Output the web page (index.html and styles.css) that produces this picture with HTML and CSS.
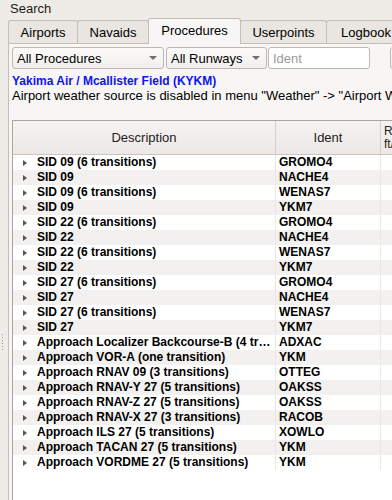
FILE: index.html
```html
<!DOCTYPE html>
<html>
<head>
<meta charset="utf-8">
<link rel="stylesheet" href="styles.css">
</head>
<body>
<div class="app">
  <div class="search-label">Search</div>
  <div class="tabs">
    <div class="tab w-airports">Airports</div>
    <div class="tab w-navaids">Navaids</div>
    <div class="tab active w-procs">Procedures</div>
    <div class="tab w-user">Userpoints</div>
    <div class="tab w-log">Logbook</div>
  </div>
  <div class="panel">
    <div class="filters">
      <div class="combo w-allproc"><span>All Procedures</span><i class="caret"></i></div>
      <div class="combo w-allrwy"><span>All Runways</span><i class="caret"></i></div>
      <div class="input w-ident">Ident</div>
      <div class="input w-more"></div>
    </div>
    <div class="title">Yakima Air / Mcallister Field (KYKM)</div>
    <div class="note">Airport weather source is disabled in menu "Weather" -&gt; "Airport Weather Source".</div>
    <div class="table">
      <div class="thead">
        <div class="th c-desc">Description</div>
        <div class="th c-ident">Ident</div>
        <div class="th c-rest">R<br>ft/</div>
      </div>
      <div class="tbody">
        <div class="row"><div class="c-desc"><i class="arrow"></i><span>SID 09 (6 transitions)</span></div><div class="c-ident"><span>GROMO4</span></div><div class="c-rest"></div></div>
        <div class="row"><div class="c-desc"><i class="arrow"></i><span>SID 09</span></div><div class="c-ident"><span>NACHE4</span></div><div class="c-rest"></div></div>
        <div class="row"><div class="c-desc"><i class="arrow"></i><span>SID 09 (6 transitions)</span></div><div class="c-ident"><span>WENAS7</span></div><div class="c-rest"></div></div>
        <div class="row"><div class="c-desc"><i class="arrow"></i><span>SID 09</span></div><div class="c-ident"><span>YKM7</span></div><div class="c-rest"></div></div>
        <div class="row"><div class="c-desc"><i class="arrow"></i><span>SID 22 (6 transitions)</span></div><div class="c-ident"><span>GROMO4</span></div><div class="c-rest"></div></div>
        <div class="row"><div class="c-desc"><i class="arrow"></i><span>SID 22</span></div><div class="c-ident"><span>NACHE4</span></div><div class="c-rest"></div></div>
        <div class="row"><div class="c-desc"><i class="arrow"></i><span>SID 22 (6 transitions)</span></div><div class="c-ident"><span>WENAS7</span></div><div class="c-rest"></div></div>
        <div class="row"><div class="c-desc"><i class="arrow"></i><span>SID 22</span></div><div class="c-ident"><span>YKM7</span></div><div class="c-rest"></div></div>
        <div class="row"><div class="c-desc"><i class="arrow"></i><span>SID 27 (6 transitions)</span></div><div class="c-ident"><span>GROMO4</span></div><div class="c-rest"></div></div>
        <div class="row"><div class="c-desc"><i class="arrow"></i><span>SID 27</span></div><div class="c-ident"><span>NACHE4</span></div><div class="c-rest"></div></div>
        <div class="row"><div class="c-desc"><i class="arrow"></i><span>SID 27 (6 transitions)</span></div><div class="c-ident"><span>WENAS7</span></div><div class="c-rest"></div></div>
        <div class="row"><div class="c-desc"><i class="arrow"></i><span>SID 27</span></div><div class="c-ident"><span>YKM7</span></div><div class="c-rest"></div></div>
        <div class="row"><div class="c-desc"><i class="arrow"></i><span>Approach Localizer Backcourse-B (4 tr…</span></div><div class="c-ident"><span>ADXAC</span></div><div class="c-rest"></div></div>
        <div class="row"><div class="c-desc"><i class="arrow"></i><span>Approach VOR-A (one transition)</span></div><div class="c-ident"><span>YKM</span></div><div class="c-rest"></div></div>
        <div class="row"><div class="c-desc"><i class="arrow"></i><span>Approach RNAV 09 (3 transitions)</span></div><div class="c-ident"><span>OTTEG</span></div><div class="c-rest"></div></div>
        <div class="row"><div class="c-desc"><i class="arrow"></i><span>Approach RNAV-Y 27 (5 transitions)</span></div><div class="c-ident"><span>OAKSS</span></div><div class="c-rest"></div></div>
        <div class="row"><div class="c-desc"><i class="arrow"></i><span>Approach RNAV-Z 27 (5 transitions)</span></div><div class="c-ident"><span>OAKSS</span></div><div class="c-rest"></div></div>
        <div class="row"><div class="c-desc"><i class="arrow"></i><span>Approach RNAV-X 27 (3 transitions)</span></div><div class="c-ident"><span>RACOB</span></div><div class="c-rest"></div></div>
        <div class="row"><div class="c-desc"><i class="arrow"></i><span>Approach ILS 27 (5 transitions)</span></div><div class="c-ident"><span>XOWLO</span></div><div class="c-rest"></div></div>
        <div class="row"><div class="c-desc"><i class="arrow"></i><span>Approach TACAN 27 (5 transitions)</span></div><div class="c-ident"><span>YKM</span></div><div class="c-rest"></div></div>
        <div class="row"><div class="c-desc"><i class="arrow"></i><span>Approach VORDME 27 (5 transitions)</span></div><div class="c-ident"><span>YKM</span></div><div class="c-rest"></div></div>
      </div>
    </div>
  </div>
  <div class="splitter"><i></i><i></i><i></i><i></i><i></i><i></i></div>
</div>
</body>
</html>
```
FILE: styles.css
```css
html, body {
  margin: 0;
  padding: 0;
}
body {
  width: 392px;
  height: 500px;
  overflow: hidden;
  background: #efebe7;
  font-family: "Liberation Sans", Arial, sans-serif;
  font-size: 13px;
  color: #000;
}
.app {
  position: relative;
  height: 500px;
  overflow: hidden;
}
.search-label {
  box-sizing: border-box;
  height: 18px;
  line-height: 16px;
  padding-top: 1px;
  padding-left: 10px;
  color: #1a1a1a;
}
.tabs {
  display: flex;
  align-items: flex-end;
  margin-left: 8px;
  height: 25px;
  white-space: nowrap;
}
.tab {
  box-sizing: border-box;
  height: 23px;
  line-height: 23px;
  text-align: center;
  background: #e9e5e1;
  border: 1px solid #c2beb9;
  border-bottom: none;
  border-radius: 3px 3px 0 0;
  margin-right: -1px;
  flex: none;
}
.tab.active {
  height: 26px;
  line-height: 24px;
  background: #f7f6f4;
  position: relative;
  z-index: 2;
  margin-bottom: -1px;
}
.w-airports { width: 70px; }
.w-navaids { width: 72px; }
.w-procs { width: 93px; }
.w-user { width: 87px; }
.w-log { width: 80px; }
.panel {
  margin-left: 8px;
  height: 457px;
  border-left: 1px solid #c2beb9;
  border-top: 1px solid #c2beb9;
  background: #f7f6f4;
  padding-left: 3px;
  position: relative;
  z-index: 1;
  box-sizing: border-box;
  overflow: hidden;
}
.filters {
  display: flex;
  gap: 2px;
  padding-top: 3px;
  height: 22px;
  white-space: nowrap;
}
.combo, .input {
  box-sizing: border-box;
  height: 22px;
  border: 1px solid #bcb8b3;
  border-radius: 3px;
  background: linear-gradient(#fbfaf9, #f1efed);
  display: flex;
  align-items: center;
  padding-left: 4px;
  flex: none;
}
.input {
  background: #fff;
  color: #9a9a9a;
}
.combo span { flex: 1; }
.caret {
  width: 0; height: 0;
  border-left: 4px solid transparent;
  border-right: 4px solid transparent;
  border-top: 4px solid #707070;
  margin-right: 6px;
}
.w-allproc { width: 152px; }
.w-allrwy { width: 101px; }
.w-ident { width: 102px; margin-left: -1px; }
.w-more { width: 40px; margin-left: 18px; background: linear-gradient(#fbfaf9, #f1efed); }
.title {
  margin-top: 5px;
  font-size: 12px;
  font-weight: bold;
  color: #0f14f0;
  line-height: 14px;
  height: 14px;
  white-space: nowrap;
}
.note {
  line-height: 16px;
  height: 16px;
  white-space: nowrap;
}
.table {
  margin-top: 16px;
  width: 460px;
  height: 390px;
  background: #fff;
  border-left: 1px solid #a7a39e;
  border-top: 1px solid #a7a39e;
  box-sizing: border-box;
}
.thead {
  display: flex;
  height: 33px;
  background: linear-gradient(#f5f3f1, #ebe8e5);
  border-bottom: 1px solid #c9c5c0;
}
.th {
  box-sizing: border-box;
  display: flex;
  align-items: center;
  justify-content: center;
  border-right: 1px solid #d3cfcb;
  color: #222;
  line-height: 13px;
}
.th.c-rest {
  justify-content: flex-start;
  padding-left: 3px;
  font-size: 12px;
}
.c-desc { width: 263px; flex: none; box-sizing: border-box; }
.c-ident { width: 105px; flex: none; box-sizing: border-box; }
.c-rest { width: 90px; flex: none; box-sizing: border-box; }
.row {
  display: flex;
  height: 15px;
  font-size: 12px;
  font-weight: bold;
  line-height: 15px;
  white-space: nowrap;
}
.row:nth-child(even) { background: #f3f1ef; }
.row > div {
  border-right: 1px solid #ebe8e5;
  display: flex;
  align-items: center;
  overflow: hidden;
}
.row .c-desc { padding-left: 10px; }
.row .c-ident { padding-left: 3px; }
.arrow {
  width: 0; height: 0;
  border-top: 3.5px solid transparent;
  border-bottom: 3.5px solid transparent;
  border-left: 4px solid #555;
  margin-right: 10px;
  flex: none;
}
.splitter {
  position: absolute;
  left: 2px;
  top: 334px;
  display: flex;
  flex-direction: column;
  gap: 2px;
}
.splitter i {
  display: block;
  width: 1px;
  height: 1px;
  background: #9a9692;
}
```
